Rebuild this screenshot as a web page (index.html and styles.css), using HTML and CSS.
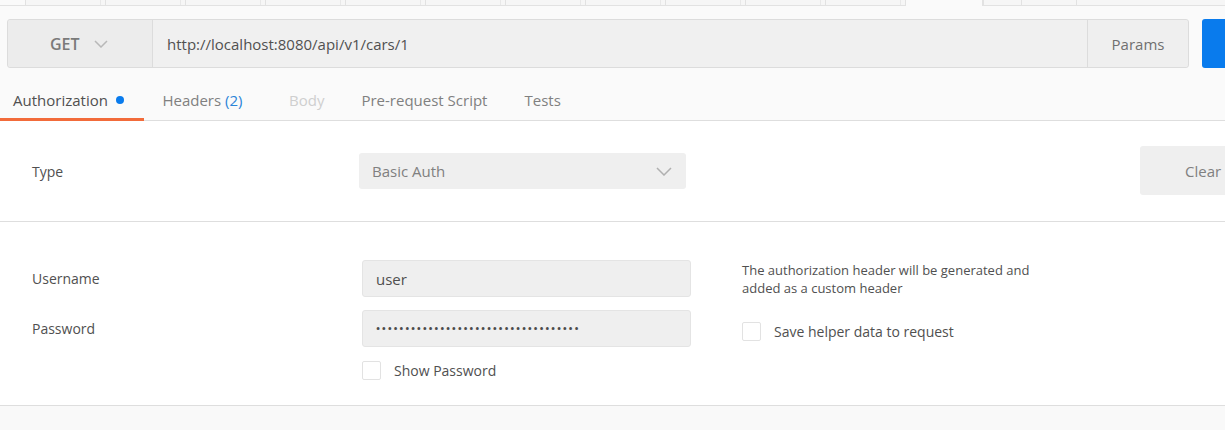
FILE: index.html
```html
<!DOCTYPE html>
<html>
<head>
<meta charset="utf-8">
<link rel="stylesheet" href="styles.css">
</head>
<body>
<div class="app">
  <div class="tabstrip">
    <div class="tt"></div><div class="tt"></div><div class="tt"></div><div class="tt"></div>
    <div class="tt"></div><div class="tt"></div><div class="tt"></div><div class="tt"></div>
    <div class="tt"></div><div class="tt"></div><div class="tt"></div>
    <div class="tt active"></div>
    <div class="tt narrow"></div><div class="tt mid"></div><div class="tt wide"></div>
  </div>

  <div class="reqbar">
    <div class="req">
      <div class="method">
        <span class="method-name">GET</span>
        <svg class="chev" width="14" height="8" viewBox="0 0 14 8"><path d="M1 1l6 6 6-6" fill="none" stroke="#b8b8b8" stroke-width="1.5"/></svg>
      </div>
      <div class="url">http://localhost:8080/api/v1/cars/1</div>
      <div class="params">Params</div>
    </div>
    <div class="send">Send</div>
  </div>

  <div class="tabs">
    <div class="tab active">Authorization<span class="dot"></span></div>
    <div class="tab headers">Headers <span class="count">(2)</span></div>
    <div class="tab disabled">Body</div>
    <div class="tab">Pre-request Script</div>
    <div class="tab">Tests</div>
  </div>

  <section class="type-row">
    <div class="label type-label">Type</div>
    <div class="select">
      <span>Basic Auth</span>
      <svg class="chev" width="16" height="9" viewBox="0 0 16 9"><path d="M1 1l7 7 7-7" fill="none" stroke="#b0b0b0" stroke-width="1.5"/></svg>
    </div>
    <div class="spacer"></div>
    <div class="clear">Clear</div>
  </section>

  <section class="fields">
    <div class="label r1">Username</div>
    <div class="input r1">user</div>
    <div class="label r2">Password</div>
    <div class="input r2 pw">•••••••••••••••••••••••••••••••••••</div>
    <label class="check r3"><span class="box"></span><span>Show Password</span></label>
    <div class="helper">
      <p class="helper-text">The authorization header will be generated and<br>added as a custom header</p>
      <label class="check"><span class="box"></span><span>Save helper data to request</span></label>
    </div>
  </section>

  <div class="footer"></div>
</div>
</body>
</html>
```

FILE: styles.css
```css
* { box-sizing: border-box; }
html, body { margin: 0; padding: 0; }
body {
  background: #fafafa;
  font-family: "Open Sans", "Noto Sans", sans-serif;
  font-size: 14px;
  color: #505050;
  overflow: hidden;
  height: 430px;
}
.app { width: 1320px; }

/* top tab strip */
.tabstrip {
  display: flex;
  height: 6px;
  padding-left: 25px;
  border-bottom: 1px solid #e2e2e2;
}
.tt {
  position: relative;
  width: 80px;
  height: 5px;
  border-left: 1px solid #e2e2e2;
  background: #f6f6f6;
}
.tt::after {
  content: "";
  position: absolute;
  right: 4px;
  top: 0;
  height: 5px;
  border-left: 1px solid #e8e8e8;
}
.tt.active {
  width: 78px;
  height: 6px;
  background: #fafafa;
  border-right: 1px solid #e2e2e2;
}
.tt.active::after, .tt.narrow::after, .tt.mid::after, .tt.wide::after { display: none; }
.tt.narrow { width: 38px; }
.tt.mid { width: 55px; }
.tt.wide { width: 200px; }

/* request bar */
.reqbar {
  display: flex;
  gap: 13px;
  margin-top: 13px;
  padding: 0 7px;
  height: 49px;
}
.req {
  flex: 1;
  display: flex;
  border: 1px solid #dcdcdc;
  border-radius: 3px;
  background: #efefef;
}
.method {
  width: 145px;
  display: flex;
  align-items: center;
  padding-left: 42px;
  gap: 14px;
  background: #ececec;
  border-right: 1px solid #dcdcdc;
  border-radius: 3px 0 0 3px;
}
.method-name {
  font-size: 16px;
  font-weight: 600;
  color: #7a7a7a;
}
.url {
  flex: 1;
  display: flex;
  align-items: center;
  padding-left: 14px;
  background: #f0f0f0;
  color: #505050;
  font-size: 15px;
}
.params {
  width: 101px;
  display: flex;
  align-items: center;
  justify-content: center;
  border-left: 1px solid #dcdcdc;
  color: #707070;
  background: #efefef;
  border-radius: 0 3px 3px 0;
  font-size: 15px;
}
.send {
  width: 111px;
  background: #097bed;
  color: #fff;
  border-radius: 3px;
  display: flex;
  align-items: center;
  padding-left: 23px;
  font-weight: 600;
}

/* tabs */
.tabs {
  display: flex;
  margin-top: 17px;
  height: 36px;
  border-bottom: 1px solid #dedede;
}
.tab {
  display: flex;
  align-items: center;
  padding: 0 18.5px 6px;
  height: 35px;
  color: #808080;
  font-size: 15px;
}
.tab.active {
  padding: 0 20px 3px 13px;
  height: 36px;
  margin-bottom: -1px;
  border-bottom: 3px solid #f26b3a;
  color: #505050;
}
.tab.headers { padding-right: 28px; }
.dot {
  width: 8px;
  height: 8px;
  border-radius: 50%;
  background: #097bed;
  margin-left: 8px;
}
.count { color: #2b84d8; margin-left: 4px; }
.tab.disabled { color: #cfcfcf; }

/* type row */
.type-row {
  display: flex;
  align-items: center;
  height: 101px;
  padding-left: 32px;
  background: #fff;
  border-bottom: 1px solid #dedede;
}
.label { color: #505050; }
.type-label { width: 327px; }
.select {
  width: 327px;
  height: 36px;
  background: #efefef;
  border-radius: 3px;
  display: flex;
  align-items: center;
  justify-content: space-between;
  padding: 0 14px 0 13px;
  color: #808080;
  font-size: 15px;
}
.spacer { flex: 1; }
.clear {
  width: 124px;
  height: 49px;
  margin-right: 56px;
  margin-top: -1px;
  background: #efefef;
  border-radius: 3px;
  display: flex;
  align-items: center;
  padding-left: 45px;
  color: #808080;
  font-size: 15px;
}

/* fields */
.fields {
  display: grid;
  grid-template-columns: 330px 329px 51px auto;
  grid-template-rows: 37px 37px auto;
  row-gap: 13px;
  height: 184px;
  padding: 38px 0 0 32px;
  background: #fff;
  border-bottom: 1px solid #dedede;
  align-content: start;
}
.r1 { grid-row: 1; }
.r2 { grid-row: 2; }
.r3 { grid-row: 3; grid-column: 2; margin-top: 1px; }
.label.r1, .label.r2 { grid-column: 1; align-self: center; }
.input {
  grid-column: 2;
  background: #efefef;
  border: 1px solid #e4e4e4;
  border-radius: 3px;
  display: flex;
  align-items: center;
  padding-left: 13px;
  color: #505050;
  font-size: 15px;
}
.input.pw {
  font-size: 11px;
  letter-spacing: 1.7px;
  color: #4a4a4a;
  font-weight: 600;
}
.check {
  display: flex;
  align-items: center;
  gap: 13px;
  color: #505050;
}
.box {
  width: 19px;
  height: 19px;
  border: 1px solid #e2e2e2;
  border-radius: 2px;
  background: #fff;
}
.helper {
  grid-column: 4;
  grid-row: 1 / span 3;
}
.helper-text {
  margin: 1px 0 0 0;
  font-size: 13px;
  line-height: 18px;
  color: #505050;
}
.helper .check { margin-top: 25px; }

.footer {
  height: 40px;
  background: #f9f9f9;
}
```
